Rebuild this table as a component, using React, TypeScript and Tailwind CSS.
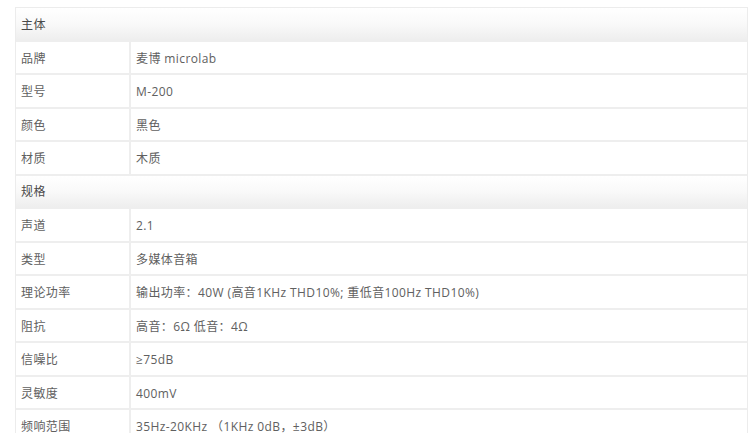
import React from "react";

const sections: { title: string; rows: [string, string][] }[] = [
  {
    title: "主体",
    rows: [
      ["品牌", "麦博 microlab"],
      ["型号", "M-200"],
      ["颜色", "黑色"],
      ["材质", "木质"],
    ],
  },
  {
    title: "规格",
    rows: [
      ["声道", "2.1"],
      ["类型", "多媒体音箱"],
      ["理论功率", "输出功率：40W (高音1KHz THD10%; 重低音100Hz THD10%)"],
      ["阻抗", "高音：6Ω 低音：4Ω"],
      ["信噪比", "≥75dB"],
      ["灵敏度", "400mV"],
      ["频响范围", "35Hz-20KHz （1KHz 0dB，±3dB）"],
    ],
  },
];

export default function App() {
  return (
    <div
      className="w-[750px] h-[433px] overflow-hidden bg-white pt-[7px] pl-[15px] pr-[2px] text-[12px] text-[#606060] tracking-[0.4px]"
      style={{ fontFamily: '"Open Sans", "Noto Sans CJK SC", sans-serif' }}
    >
      <div className="flex flex-col gap-[2px] bg-[#eeeeee] border border-[#ececec]">
        {sections.map((s) => (
          <React.Fragment key={s.title}>
            <div className="h-[31.5px] flex items-center pl-[5px] pt-[2px] bg-gradient-to-b from-white via-[#f9f9f9] to-[#eeeeee] text-[#4a4a4a]">
              {s.title}
            </div>
            {s.rows.map(([k, v]) => (
              <div key={k} className="h-[31.5px] flex gap-[2px]">
                <div className="w-[113px] shrink-0 bg-white flex items-center pl-[5px] pt-[3px]">{k}</div>
                <div className="flex-1 bg-white flex items-center pl-[5px] pt-[3px]">{v}</div>
              </div>
            ))}
          </React.Fragment>
        ))}
      </div>
    </div>
  );
}
